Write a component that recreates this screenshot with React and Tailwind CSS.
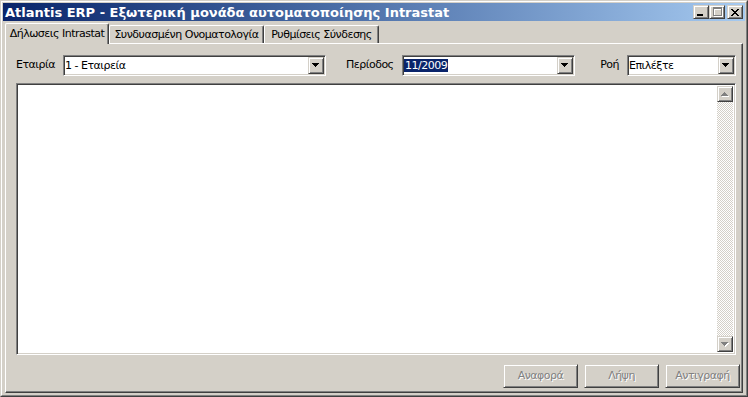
import React from 'react';

const raised = 'border border-t-[#d4d0c8] border-l-[#d4d0c8] border-r-[#404040] border-b-[#404040] shadow-[inset_1px_1px_#fff,inset_-1px_-1px_#808080]';
const sunken = 'border border-t-[#808080] border-l-[#808080] border-r-white border-b-white shadow-[inset_1px_1px_#404040,inset_-1px_-1px_#d4d0c8]';

const CLOSE_ROWS = ['11000011', '01100110', '00111100', '00011000', '00111100', '01100110', '11000011'];

const CloseGlyph = () => (
  <svg width="8" height="7" className="block" shapeRendering="crispEdges">
    {CLOSE_ROWS.map((row, y) =>
      row.split('').map((c, x) => (c === '1' ? <rect key={`${x}-${y}`} x={x} y={y} width="1" height="1" fill="#000" /> : null))
    )}
  </svg>
);

const DownArrow = ({ color = '#000', shadow = false }) => (
  <svg width="8" height="5" className="block" shapeRendering="crispEdges">
    {shadow && (
      <g fill="#fff" transform="translate(1,1)">
        <rect x="0" y="0" width="7" height="1" />
        <rect x="1" y="1" width="5" height="1" />
        <rect x="2" y="2" width="3" height="1" />
        <rect x="3" y="3" width="1" height="1" />
      </g>
    )}
    <g fill={color}>
      <rect x="0" y="0" width="7" height="1" />
      <rect x="1" y="1" width="5" height="1" />
      <rect x="2" y="2" width="3" height="1" />
      <rect x="3" y="3" width="1" height="1" />
    </g>
  </svg>
);

const UpArrow = () => (
  <svg width="8" height="5" className="block" shapeRendering="crispEdges">
    <g fill="#fff" transform="translate(1,1)">
      <rect x="3" y="0" width="1" height="1" />
      <rect x="2" y="1" width="3" height="1" />
      <rect x="1" y="2" width="5" height="1" />
      <rect x="0" y="3" width="7" height="1" />
    </g>
    <g fill="#808080">
      <rect x="3" y="0" width="1" height="1" />
      <rect x="2" y="1" width="3" height="1" />
      <rect x="1" y="2" width="5" height="1" />
      <rect x="0" y="3" width="7" height="1" />
    </g>
  </svg>
);

const TitleButton = ({ children, className = '' }) => (
  <div className={`w-[16px] h-[14px] bg-[#d4d0c8] flex items-center justify-center ${raised} ${className}`}>{children}</div>
);

const Combo = ({ width, children }) => (
  <div className={`${width} h-[21px] bg-white flex items-center ${sunken}`}>
    <div className="flex-1 min-w-0 pl-px whitespace-nowrap overflow-hidden leading-[15px]">{children}</div>
    <div className={`w-[16px] h-[17px] mr-px bg-[#d4d0c8] flex items-center justify-center ${raised}`}>
      <DownArrow />
    </div>
  </div>
);

const Tab = ({ label, active, width }) =>
  active ? (
    <div className={`${width} h-[21px] -mb-px relative z-10 bg-[#d4d0c8] rounded-t-[2px] border-t border-l border-r border-t-white border-l-white border-r-[#404040] shadow-[inset_-1px_0_#808080] flex items-center justify-center whitespace-nowrap`}>
      {label}
    </div>
  ) : (
    <div className={`${width} h-[18px] bg-[#d4d0c8] rounded-t-[2px] border-t border-l border-r border-t-white border-l-white border-r-[#404040] shadow-[inset_-1px_0_#808080] flex items-center justify-center pt-px whitespace-nowrap`}>
      {label}
    </div>
  );

const ActionButton = ({ label }) => (
  <div className={`w-[75px] h-[24px] bg-[#d4d0c8] flex items-center justify-center text-[#808080] [text-shadow:1px_1px_#fff] ${raised}`}>
    {label}
  </div>
);

export default function App() {
  return (
    <div className="w-[748px] h-[397px] bg-[#d4d0c8] border border-t-[#d4d0c8] border-l-[#d4d0c8] border-r-[#404040] border-b-[#404040] font-['DejaVu_Sans',sans-serif] text-[11px] tracking-[-0.5px] text-black overflow-hidden select-none">
      <div className="h-full border border-t-white border-l-white border-r-[#808080] border-b-[#808080] p-px flex flex-col">
        {/* title bar */}
        <div className="h-[18px] shrink-0 bg-linear-to-r from-[#0a246a] to-[#a6caf0] flex items-center pl-[2px] pr-[2px]">
          <span className="text-white font-bold text-[13px] tracking-[0px] leading-none whitespace-nowrap">
            Atlantis ERP - Εξωτερική μονάδα αυτοματοποίησης Intrastat
          </span>
          <div className="ml-auto flex items-center">
            <TitleButton>
              <svg width="14" height="12" className="block" shapeRendering="crispEdges">
                <rect x="3" y="8" width="6" height="2" fill="#000" />
              </svg>
            </TitleButton>
            <TitleButton>
              <svg width="14" height="12" className="block" shapeRendering="crispEdges">
                <path d="M4 2h9v9H4z M5 4v6h7V4z" fill="#fff" fillRule="evenodd" />
                <path d="M3 1h9v9H3z M4 3v6h7V3z" fill="#808080" fillRule="evenodd" />
              </svg>
            </TitleButton>
            <TitleButton className="ml-[2px]">
              <CloseGlyph />
            </TitleButton>
          </div>
        </div>

        {/* tabs */}
        <div className="h-[22px] shrink-0 flex items-end pl-[2px]">
          <Tab label="Δήλωσεις Intrastat" active width="w-[104px]" />
          <Tab label="Συνδυασμένη Ονοματολογία" width="w-[155px]" />
          <Tab label="Ρυθμίσεις Σύνδεσης" width="w-[115px]" />
        </div>

        {/* panel */}
        <div className="flex-1 mx-[2px] mb-px border border-t-white border-l-white border-r-[#404040] border-b-[#404040] shadow-[inset_-1px_-1px_#808080] pt-[11px] pl-[10px] flex flex-col">
          <div className="flex items-center h-[21px] w-[720px]">
            <div className="w-[47px]">Εταιρία</div>
            <Combo width="w-[263px]">1 - Εταιρεία</Combo>
            <div className="w-[76px] pl-[20px]">Περίοδος</div>
            <Combo width="w-[173px]">
              <span className="bg-[#0a246a] text-white px-px">11/2009</span>
            </Combo>
            <div className="w-[52px] text-right pr-[8px]">Ροή</div>
            <Combo width="w-[109px]">Επιλέξτε</Combo>
          </div>

          <div className={`mt-[7px] w-[720px] h-[272px] bg-white flex justify-end ${sunken}`}>
            <div className="w-[16px] h-full py-[2px] mr-[2px] flex flex-col">
              <div className={`h-[16px] shrink-0 bg-[#d4d0c8] flex items-center justify-center ${raised}`}>
                <UpArrow />
              </div>
              <div className="flex-1 bg-[repeating-conic-gradient(#d4d0c8_0_25%,#fff_0_50%)] bg-[length:2px_2px]" />
              <div className={`h-[16px] shrink-0 bg-[#d4d0c8] flex items-center justify-center ${raised}`}>
                <DownArrow color="#808080" shadow />
              </div>
            </div>
          </div>

          <div className="mt-[9px] flex justify-end gap-[6px] pr-[2px]">
            <ActionButton label="Αναφορά" />
            <ActionButton label="Λήψη" />
            <ActionButton label="Αντιγραφή" />
          </div>
        </div>
      </div>
    </div>
  );
}
